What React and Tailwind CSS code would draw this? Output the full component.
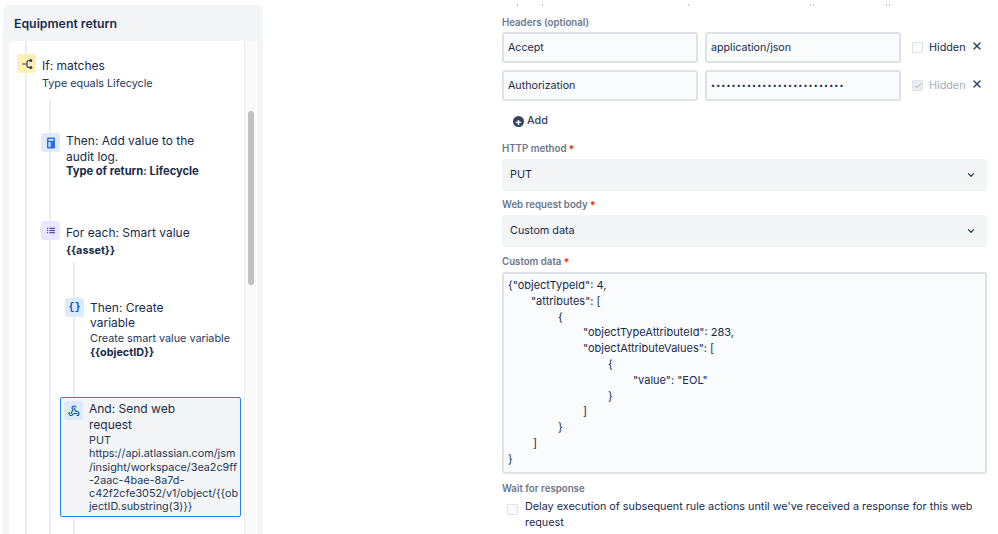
import { ChevronDown, Check, X, Webhook } from "lucide-react";

const jsonLines = [
  { pad: "pl-0", text: '{"objectTypeId": 4,' },
  { pad: "pl-[23px]", text: '"attributes": [' },
  { pad: "pl-[50px]", text: "{" },
  { pad: "pl-[75px]", text: '"objectTypeAttributeId": 283,' },
  { pad: "pl-[75px]", text: '"objectAttributeValues": [' },
  { pad: "pl-[100px]", text: "{" },
  { pad: "pl-[125px]", text: '"value": "EOL"' },
  { pad: "pl-[100px]", text: "}" },
  { pad: "pl-[75px]", text: "]" },
  { pad: "pl-[50px]", text: "}" },
  { pad: "pl-[25px]", text: "]" },
  { pad: "pl-0", text: "}" },
];

function BranchIcon() {
  return (
    <svg width="12" height="12" viewBox="0 0 12 12" fill="none" stroke="#344563" strokeWidth="1.2">
      <path d="M1 6h4.500M10 2.500H8Q6 2.500 6 4.500v3Q6 9.500 8 9.500h2" />
      <circle cx="9.800" cy="2.500" r="1" fill="#344563" />
      <circle cx="9.800" cy="9.500" r="1" fill="#344563" />
    </svg>
  );
}

function AuditIcon() {
  return (
    <svg width="10" height="12" viewBox="0 0 10 12" fill="none">
      <rect x="1" y="0.500" width="8" height="11" rx="1.200" fill="#2f6fd6" />
      <rect x="2.500" y="2" width="5" height="1.600" fill="#deebff" />
      <rect x="2.500" y="5" width="2" height="5" fill="#deebff" />
    </svg>
  );
}

function ListIcon() {
  return (
    <svg width="8" height="7" viewBox="0 0 10 8" fill="#5243aa">
      <rect x="0" y="0.500" width="1.500" height="1.500" />
      <rect x="3" y="0.500" width="7" height="1.500" />
      <rect x="0" y="3.250" width="1.500" height="1.500" />
      <rect x="3" y="3.250" width="7" height="1.500" />
      <rect x="0" y="6" width="1.500" height="1.500" />
      <rect x="3" y="6" width="7" height="1.500" />
    </svg>
  );
}

function IconBox({ className, children }) {
  return (
    <div className={`flex h-[19px] w-[19px] shrink-0 items-center justify-center rounded-[3px] ${className}`}>
      {children}
    </div>
  );
}

function FieldLabel({ children, required, className = "" }) {
  return (
    <div className={`flex h-4 items-center text-[9.700px] font-semibold text-[#6b778c] ${className}`}>
      {children}
      {required && <span className="ml-[2px] text-[11px] text-[#de350b]">*</span>}
    </div>
  );
}

function TextInput({ children, className = "" }) {
  return (
    <div className={`flex h-[31px] w-[196px] items-center rounded-[3px] border-2 border-[#dfe1e6] bg-[#fafbfc] pl-[4px] pt-[2px] text-[10.700px] text-[#172b4d] ${className}`}>
      {children}
    </div>
  );
}

function SelectBox({ children }) {
  return (
    <div className="flex h-[32px] items-center justify-between rounded-[3px] bg-[#f4f5f7] pl-2 pr-[11px] text-[10.800px] text-[#172b4d]">
      {children}
      <ChevronDown size={10} strokeWidth={3} className="text-[#344563]" />
    </div>
  );
}

function HeaderRow({ name, value, hidden }) {
  return (
    <div className="flex h-[31px] items-center">
      <TextInput>{name}</TextInput>
      <TextInput className="ml-[7px]">{value}</TextInput>
      <div
        className={`ml-[11px] flex h-[11px] w-[11px] items-center justify-center rounded-[2px] border border-[#dfe1e6] ${hidden ? "bg-[#ebecf0]" : "bg-[#fafbfc]"}`}
      >
        {hidden && <Check size={8} strokeWidth={3} className="text-[#a5adba]" />}
      </div>
      <span className={`ml-[6px] w-[38px] pt-[2px] text-[10.800px] ${hidden ? "text-[#a5adba]" : "text-[#172b4d]"}`}>Hidden</span>
      <X size={12} strokeWidth={3} className="mb-[3px] ml-[4px] text-[#344563]" />
    </div>
  );
}

export default function App() {
  return (
    <div className="flex h-[534px] w-[998px] overflow-hidden bg-white font-['Inter',sans-serif] text-[#172b4d]">
      {/* rule tree */}
      <div className="mb-[-8px] ml-[3px] mt-[5px] flex w-[260px] shrink-0 flex-col rounded-[6px] bg-[#f4f5f7] px-[6px]">
        <div className="flex h-[36px] shrink-0 items-center pl-[5px] pt-[2px] text-[12.300px] font-semibold text-[#172b4d]">
          Equipment return
        </div>
        <div className="flex min-h-0 flex-1 overflow-hidden rounded-tl-[5px] bg-white">
          <div className="w-[236px] shrink-0 border-r border-[#ebecf0] pl-[16px]">
            <div className="h-[600px] border-l-2 border-[#ebecf0] pt-[13px]">
              <div className="-ml-[10px] flex gap-[6px]">
                <IconBox className="bg-[#fff0b3]">
                  <BranchIcon />
                </IconBox>
                <div className="pt-[2px]">
                  <div className="text-[12px] leading-[20px]">If: matches</div>
                  <div className="text-[10.800px] leading-[16px] text-[#253858]">Type equals Lifecycle</div>
                </div>
              </div>

              <div className="ml-[22px] mt-[8px] h-[500px] border-l-2 border-[#ebecf0] pt-[33px]">
                <div className="-ml-[10px] flex gap-[6px]">
                  <IconBox className="bg-[#deebff]">
                    <AuditIcon />
                  </IconBox>
                  <div className="w-[150px]">
                    <div className="text-[12px] leading-[16px]">Then: Add value to the audit log.</div>
                    <div className="-mt-[1px] text-[11.150px] font-bold leading-[14px]">Type of return: Lifecycle</div>
                  </div>
                </div>

                <div className="-ml-[10px] mt-[43px] flex gap-[6px]">
                  <IconBox className="bg-[#eae6ff]">
                    <ListIcon />
                  </IconBox>
                  <div className="pt-[2px]">
                    <div className="text-[12px] leading-[20px]">For each: Smart value</div>
                    <div className="text-[10.800px] font-bold leading-[16px]">{"{{asset}}"}</div>
                  </div>
                </div>

                <div className="ml-[22px] mt-[3px] h-[300px] border-l-2 border-[#ebecf0] pt-[36px]">
                  <div className="-ml-[10px] flex gap-[6px]">
                    <IconBox className="bg-[#deebff] font-['Liberation_Mono',monospace] text-[10px] font-bold text-[#0052cc]">
                      {"{}"}
                    </IconBox>
                    <div className="w-[146px] pt-[2px]">
                      <div className="w-[90px] text-[12px] leading-[15px]">Then: Create variable</div>
                      <div className="mt-[2px] text-[10.800px] leading-[14px] text-[#253858]">Create smart value variable</div>
                      <div className="text-[10.800px] font-bold leading-[14px]">{"{{objectID}}"}</div>
                    </div>
                  </div>

                  <div className="-ml-[15px] mt-[37px] flex w-[181px] gap-[6px] rounded-[2px] border border-[#2684ff] bg-[#f4f5f7] pb-[2px] pl-[3px] pt-[3px]">
                    <IconBox className="bg-[#deebff]">
                      <Webhook size={12} strokeWidth={2.2} className="text-[#0052cc]" />
                    </IconBox>
                    <div className="min-w-0">
                      <div className="w-[100px] text-[12px] leading-[16px]">And: Send web request</div>
                      <div className="mt-[1px] whitespace-nowrap text-[10.800px] leading-[13.300px] text-[#253858]">
                        PUT
                        <br />
                        https://api.atlassian.com/jsm
                        <br />
                        /insight/workspace/3ea2c9ff
                        <br />
                        -2aac-4bae-8a7d-
                        <br />
                        c42f2cfe3052/v1/object/{"{{ob"}
                        <br />
                        {"jectID.substring(3)}}"}
                      </div>
                    </div>
                  </div>
                </div>
              </div>
            </div>
          </div>
          {/* scrollbar */}
          <div className="w-[11px] shrink-0 bg-[#fafafa] pl-[3px] pt-[70px]">
            <div className="h-[174px] w-[6px] rounded-[3px] bg-[#c1c1c1]" />
          </div>
        </div>
      </div>

      {/* web request form */}
      <div className="ml-[239px] w-[485px] shrink-0 pt-[4px]">
        {/* descenders of the line cut off above */}
        <div className="flex h-[2px]">
          <span className="ml-[15px] w-[1px] bg-[#c1c7d0]" />
          <span className="ml-[24px] w-[1px] bg-[#c1c7d0]" />
          <span className="ml-[145px] w-[1px] bg-[#c1c7d0]" />
          <span className="ml-[121px] w-[1px] bg-[#c1c7d0]" />
          <span className="ml-[2px] w-[1px] bg-[#c1c7d0]" />
          <span className="ml-[72px] w-[1px] bg-[#c1c7d0]" />
          <span className="ml-[2px] w-[1px] bg-[#c1c7d0]" />
        </div>
        <FieldLabel className="mt-[9px]">Headers (optional)</FieldLabel>
        <div className="mt-[1px] flex flex-col gap-[7px]">
          <HeaderRow name="Accept" value="application/json" />
          <HeaderRow
            name="Authorization"
            value={<span className="text-[7px] tracking-[1.200px]">••••••••••••••••••••••••••</span>}
            hidden
          />
        </div>
        <div className="mt-[12px] flex h-4 items-center pl-[11px] text-[10.800px] font-medium text-[#344563]">
          <span className="flex h-[11px] w-[11px] items-center justify-center rounded-full bg-[#344563] text-[10px] font-bold leading-none text-white">
            +
          </span>
          <span className="ml-[3px]">Add</span>
        </div>

        <FieldLabel required className="mt-[12px]">HTTP method</FieldLabel>
        <div className="mt-[2px]">
          <SelectBox>PUT</SelectBox>
        </div>
        <FieldLabel required className="mt-[6px]">Web request body</FieldLabel>
        <div className="mt-[2px]">
          <SelectBox>Custom data</SelectBox>
        </div>
        <FieldLabel required className="mt-[7px]">Custom data</FieldLabel>
        <div className="mt-[2px] h-[202px] rounded-[3px] border-2 border-[#dfe1e6] bg-[#fafbfc] pl-[4px] pt-[4px] text-[11px] leading-[15.800px]">
          {jsonLines.map((line, i) => (
            <div key={i} className={line.pad}>
              {line.text}
            </div>
          ))}
        </div>
        <FieldLabel className="mt-[7px]">Wait for response</FieldLabel>
        <div className="mt-[2px] flex pl-[5px]">
          <div className="mt-[5px] h-[11px] w-[11px] shrink-0 rounded-[2px] border border-[#dfe1e6] bg-[#fafbfc]" />
          <div className="ml-[7px] text-[10.800px] leading-[16px]">
            Delay execution of subsequent rule actions until we've received a response for this web request
          </div>
        </div>
      </div>
    </div>
  );
}
